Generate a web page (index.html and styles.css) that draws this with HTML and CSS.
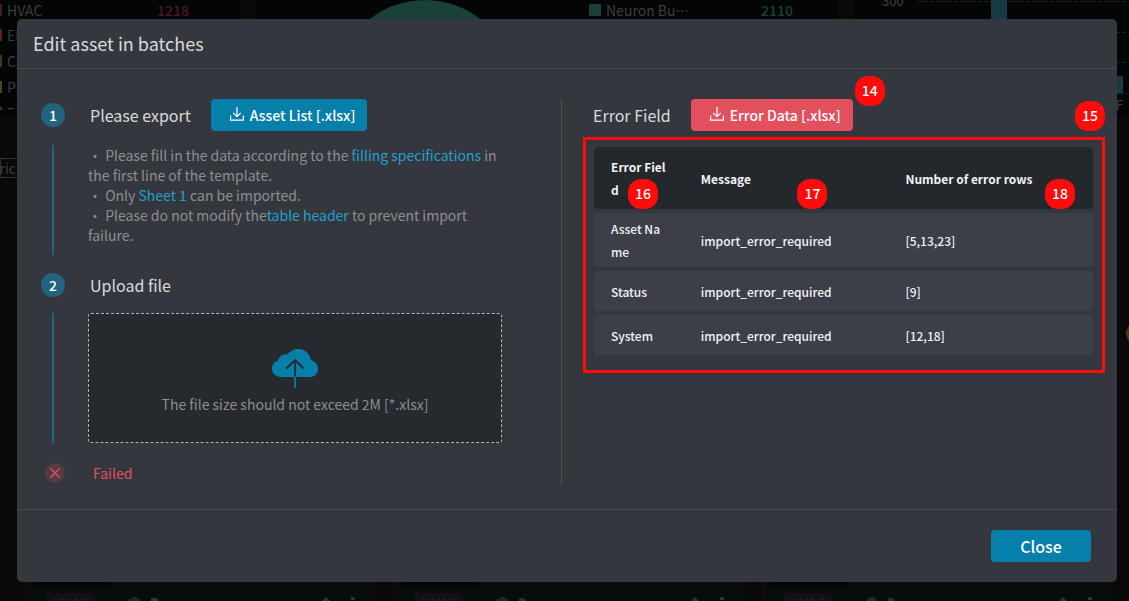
FILE: index.html
```
<!DOCTYPE html>
<html lang="en">
<head>
<meta charset="utf-8">
<title>Edit asset in batches</title>
<link rel="stylesheet" href="styles.css">
</head>
<body>
<div class="dashboard" aria-hidden="true">
  <div class="panels">
    <section class="panel panel-systems">
      <ul class="legend">
        <li class="legend-red"><i></i><span>HVAC</span><b>1218</b></li>
        <li class="legend-orange"><i></i><span>Electrical</span></li>
        <li class="legend-amber"><i></i><span>CSFT</span></li>
        <li class="legend-yellow"><i></i><span>Plumbing</span></li>
        <li class="legend-green"><i></i><span>ELV</span></li>
      </ul>
    </section>
    <section class="panel panel-pie">
      <svg class="pie" width="180" height="180" viewBox="0 0 180 180"><circle cx="90" cy="90" r="90" fill="#1a4137"/></svg>
      <div class="pie-legend"><i></i><span>Neuron Bu<span class="dots">···</span></span><b>2110</b></div>
    </section>
    <section class="panel panel-bars">
      <span class="axis-label">300</span>
      <svg class="bars" width="211" height="116" viewBox="0 0 211 116">
        <path d="M0 1.500H211M0 32.500H211M0 62.500H211" stroke="#202324" stroke-dasharray="4 2"/>
        <path d="M0 93.500H211" stroke="#1b1d1e"/>
        <path d="M73 0h16v93H73zM188 76h17v17h-17z" fill="#153c45"/>
        <text x="198" y="110" class="bar-label">F</text>
      </svg>
    </section>
  </div>
  <div class="filters"><span class="filter">Electric</span><svg class="marker" width="3" height="16" viewBox="0 0 3 16"><path d="M3 0L0 5v4l3 7z" fill="#4a3708"/></svg></div>
  <div class="cards">
    <article class="card"><span class="thumb"></span><div class="card-row"><span class="tag">HVAC</span><svg width="32" height="14" viewBox="0 0 32 14"><path d="M0 3h3V1h5v2h3v2H0zM1 6h9v8H1z" fill="#252728"/><path d="M22 2h6l3 4v8h-9z" fill="#164044"/></svg><svg class="card-tools" width="36" height="14" viewBox="0 0 36 14"><path d="M0 6l5-5 4 4-5 6zM30 1h4v3h-4z" fill="#303233"/></svg></div></article>
    <article class="card"><span class="thumb"></span><div class="card-row"><span class="tag">HVAC</span><svg width="32" height="14" viewBox="0 0 32 14"><path d="M0 3h3V1h5v2h3v2H0zM1 6h9v8H1z" fill="#252728"/><path d="M22 2h5l3 4v8h-8z" fill="#2b2d2e"/></svg><svg class="card-tools" width="36" height="14" viewBox="0 0 36 14"><path d="M0 6l5-5 4 4-5 6zM30 1h4v3h-4z" fill="#303233"/></svg></div></article>
    <article class="card"><span class="thumb"></span><div class="card-row"><span class="tag">HVAC</span><svg width="32" height="14" viewBox="0 0 32 14"><path d="M0 3h3V1h5v2h3v2H0zM1 6h9v8H1z" fill="#252728"/><path d="M22 2h5l3 4v8h-8z" fill="#2b2d2e"/></svg><svg class="card-tools" width="36" height="14" viewBox="0 0 36 14"><path d="M0 6l5-5 4 4-5 6zM30 1h4v3h-4z" fill="#303233"/></svg></div></article>
  </div>
</div>

<main class="modal" role="dialog" aria-labelledby="title">
  <header class="modal-header"><h1 id="title">Edit asset in batches</h1></header>
  <div class="modal-body">
    <div class="steps">
      <section class="step">
        <span class="step-number">1</span>
        <div class="step-head">
          <h2>Please export</h2>
          <button class="button download" type="button">
            <svg class="icon" width="16" height="16" viewBox="0 0 16 16" fill="none" stroke="currentColor" stroke-width="1.200"><path d="M8 1v9.500M4.200 6.800L8 10.600l3.800-3.800M1.600 9.500v4.600h12.800V9.500"/></svg>
            <span>Asset List [.xlsx]</span>
          </button>
        </div>
        <span class="step-line"></span>
        <ul class="hints">
          <li>Please fill in the data according to the <a href="#spec">filling specifications</a> in the first line of the template.</li>
          <li>Only <a href="#sheet">Sheet 1</a> can be imported.</li>
          <li>Please do not modify the<a href="#header">table header</a> to prevent import failure.</li>
        </ul>
      </section>
      <section class="step">
        <span class="step-number">2</span>
        <div class="step-head"><h2>Upload file</h2></div>
        <span class="step-line"></span>
        <button class="dropzone" type="button">
          <svg width="46" height="40" viewBox="0 0 46 40"><path d="M9 28C3.500 28 0 24.500 0 19.800c0-4 2.500-7.200 6-8C7 7.500 11 4.300 15.500 5.400 18.200 2 22 0 26 0c6.500 0 12 4.700 13 11.300 4 .9 7 4.200 7 8.400 0 4.700-3.600 8.300-8.500 8.300z" fill="#067fab"/><path d="M23 11v17M14.500 19.500L23 11l8.500 8.500" fill="none" stroke="#26292d" stroke-width="1.800"/><path d="M23 28v11" stroke="#067fab" stroke-width="1.800"/></svg>
          <span>The file size should not exceed 2M [*.xlsx]</span>
        </button>
      </section>
      <p class="status" role="status">
        <svg width="20" height="20" viewBox="0 0 20 20"><circle cx="10" cy="10" r="10" fill="#573b44"/><path d="M5.300 5.300l9.400 9.400M14.700 5.300l-9.400 9.400" stroke="#e2505e" stroke-width="1.400"/></svg>
        <span>Failed</span>
      </p>
    </div>
    <div class="errors">
      <div class="errors-head">
        <h2>Error Field</h2>
        <div class="marked">
          <button class="button download danger" type="button">
            <svg class="icon" width="16" height="16" viewBox="0 0 16 16" fill="none" stroke="currentColor" stroke-width="1.200"><path d="M8 1v9.500M4.200 6.800L8 10.600l3.800-3.800M1.600 9.500v4.600h12.800V9.500"/></svg>
            <span>Error Data [.xlsx]</span>
          </button>
          <span class="badge badge-button">14</span>
        </div>
      </div>
      <div class="frame">
        <span class="badge badge-frame">15</span>
        <table class="table">
          <colgroup><col class="col-field"><col class="col-message"><col></colgroup>
          <thead><tr>
            <th scope="col">Error Field<span class="badge badge-field">16</span></th>
            <th scope="col">Message<span class="badge badge-message">17</span></th>
            <th scope="col">Number of error rows<span class="badge badge-rows">18</span></th>
          </tr></thead>
          <tbody>
            <tr><td>Asset Name</td><td>import_error_required</td><td>[5,13,23]</td></tr>
            <tr><td>Status</td><td>import_error_required</td><td>[9]</td></tr>
            <tr><td>System</td><td>import_error_required</td><td>[12,18]</td></tr>
          </tbody>
        </table>
      </div>
    </div>
  </div>
  <footer class="modal-footer"><button class="button close" type="button">Close</button></footer>
</main>
</body>
</html>
```
FILE: styles.css
```
* { box-sizing: border-box; }
body {
  margin: 0;
  position: relative;
  min-height: 100vh;
  overflow: hidden;
  background: #09090a;
  color: #d9dadb;
  font-family: "Noto Sans CJK SC", "Noto Sans", sans-serif;
  font-size: 14px;
  line-height: 20px;
}
h1, h2, p, ul { margin: 0; padding: 0; font-weight: 400; }
ul { list-style: none; }
button { font: inherit; }
a { color: #23a0cb; text-decoration: none; }

/* dimmed dashboard behind the dialog */
.dashboard {
  position: absolute;
  inset: 0;
  overflow: hidden;
  display: flex;
  flex-direction: column;
  color: #3c3e40;
}
.panels { display: grid; grid-template-columns: 239px 583px 1fr; gap: 16px; height: 118px; }
.panel { background: #040506; overflow: hidden; display: flex; }
.legend { flex: 1; height: 110px; overflow: hidden; }
.legend li { display: flex; align-items: center; height: 26px; gap: 5px; }
.legend li:first-child { height: 22px; padding-bottom: 2px; }
.legend i { width: 2px; height: 12px; background: currentColor; }
.legend span { width: 145px; color: #3c3e40; }
.legend b { font-weight: 500; }
.legend-red { color: #481b1f; }
.legend-orange { color: #54280e; }
.legend-amber { color: #4b3512; }
.legend-yellow { color: #4b4614; }
.legend-green { color: #29411e; }
.panel-pie { padding-left: 80px; align-items: flex-start; }
.pie { flex: none; }
.pie-legend { display: flex; align-items: center; gap: 5px; height: 20px; padding-left: 74px; }
.pie-legend i { width: 12px; height: 12px; background: #1a4137; }
.pie-legend > span { width: 150px; }
.pie-legend b { color: #1a4137; font-weight: 500; }
.dots { font-family: "DejaVu Sans", sans-serif; }
.panel-bars { padding-left: 28px; gap: 14px; font-size: 13px; }
.axis-label { line-height: 2px; }
.bar-label { fill: #3c3e40; font-size: 13px; }
.filters { flex: 1; display: flex; justify-content: space-between; padding-top: 40px; }
.filter { width: 80px; height: 20px; border: 1px solid #303335; text-align: left; direction: rtl; padding-right: 63px; line-height: 18px; white-space: nowrap; }
.marker { margin-top: 168px; }
.cards { display: grid; grid-template-columns: repeat(3, 1fr); gap: 16px; padding: 0 16px 0 24px; height: 101px; }
.card { background: #0a0b0b; padding: 0 9px; }
.thumb { display: block; width: 78px; height: 87px; border-radius: 4px; background: #050606; }
.card-row { display: flex; align-items: center; padding: 6px 10px 0 13px; gap: 34px; }
.tag { width: 49px; border-radius: 4px; background: #121017; color: #231b3a; text-align: center; font-weight: 500; }
.card-tools { margin-left: auto; }

/* dialog */
.modal {
  position: relative;
  margin: 19px 12px 19px 17px;
  border-radius: 5px;
  background: #35373f;
}
.modal-header { padding: 12px 16px; border-bottom: 1px solid #494b4e; }
.modal-header h1 { font-size: 18px; line-height: 25px; }
.modal-body { display: grid; grid-template-columns: 545fr 555fr; padding: 30px 0 24px; }
.modal-footer { display: flex; justify-content: flex-end; padding: 20px 26px; border-top: 1px solid #494b4e; }
h2 { font-size: 16px; line-height: 24px; }

.steps { display: flex; flex-direction: column; gap: 14px; padding: 0 59px 0 24px; border-right: 1px solid #4b4d50; }
.step { display: grid; grid-template-columns: 24px 1fr; column-gap: 23px; row-gap: 12px; }
.step:first-child { row-gap: 14px; }
.step-number {
  align-self: center;
  height: 24px;
  border-radius: 50%;
  background: #22647d;
  color: #fff;
  font-weight: 500;
  line-height: 24px;
  text-align: center;
}
.step-head { display: flex; align-items: center; gap: 20px; height: 32px; padding-left: 2px; }
.step-line { justify-self: center; width: 2px; background: #22647d; }
.hints { padding-bottom: 10px; color: #8d8e90; }
.hints li::before { content: "・ "; }

.button { border: 0; border-radius: 4px; background: #067fab; color: #fff; font-weight: 500; }
.download { display: flex; align-items: center; gap: 5px; height: 32px; padding: 0 12px 0 18px; }
.icon { margin-bottom: 3px; }
.danger { background: #e2505e; }
.close { width: 100px; height: 32px; font-size: 16px; }

.dropzone {
  display: flex;
  flex-direction: column;
  align-items: center;
  justify-content: center;
  gap: 5px;
  height: 130px;
  padding-top: 7px;
  border: 1px dashed #b5b6b7;
  border-radius: 3px;
  background: #26292d;
  color: #8d8e90;
}
.status { display: flex; align-items: center; gap: 28px; padding: 6px 4px 2px; color: #e2505e; }

.errors { padding: 0 12px 0 21px; }
.errors-head { display: flex; align-items: center; gap: 20px; padding-left: 10px; margin-bottom: 6px; }
.marked { position: relative; }
.frame { position: relative; padding: 3px 9px 11px 8px; border: 3px solid #ff0b0b; }
.badge {
  position: absolute;
  width: 30px;
  height: 30px;
  border-radius: 13px;
  background: #ff0b0b;
  color: #fff;
  font-size: 14px;
  font-weight: 500;
  line-height: 28px;
  text-align: center;
}
.badge-button { left: calc(100% + 2px); top: -23px; }
.badge-frame { right: -3px; top: -39px; }
.badge-field { left: 34px; bottom: 0; }
.badge-message { right: 61px; bottom: 0; }
.badge-rows { right: 18px; bottom: 0; }

.table { width: 100%; table-layout: fixed; border-collapse: separate; border-spacing: 0 4px; font-size: 12px; line-height: 23px; }
.col-field { width: 18%; }
.col-message { width: 41%; }
th, td { padding: 4px 17px; text-align: left; vertical-align: middle; word-break: break-all; color: #f1f2f3; }
th { position: relative; padding-top: 8px; padding-bottom: 8px; background: #24272b; font-weight: 700; }
td { height: 40px; background: #3c3f47; font-weight: 500; }
th:first-child, td:first-child { border-radius: 4px 0 0 4px; }
th:last-child, td:last-child { border-radius: 0 4px 4px 0; }
```
